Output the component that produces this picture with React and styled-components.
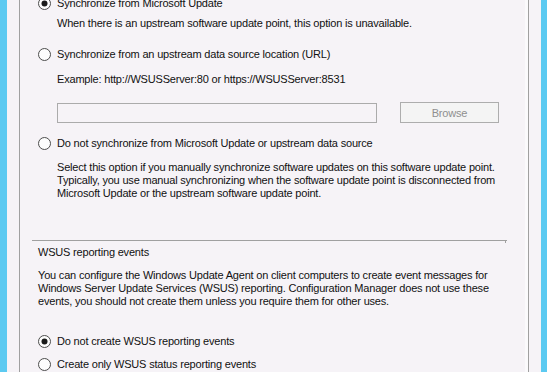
import React from "react";
import styled, { createGlobalStyle } from "styled-components";

const Global = createGlobalStyle`
  html, body { margin: 0; padding: 0; }
  body {
    width: 547px; height: 372px; overflow: hidden;
    font-family: "Liberation Sans", Arial, sans-serif;
    font-size: 11px; color: #111;
    letter-spacing: -0.19px;
  }
`;

const Page = styled.div`
  display: flex;
  width: 547px;
  height: 372px;
  overflow: hidden;
  background: #5ccaf1;
`;

const Strip = styled.div`
  width: ${(p) => p.$w}px;
  flex: none;
`;

const Window = styled.div`
  flex: 1;
  display: flex;
  background: #f6f3f7;
  padding: 0 12px;
`;

const Frame = styled.div`
  flex: 1;
  display: flex;
  border-left: 1px solid #a0a0a0;
  border-right: 1px solid #a0a0a0;
`;

const Content = styled.div`
  flex: 1;
  border-right: 3px solid #fbfafc;
  padding-left: 18px;
  display: flex;
  flex-direction: column;
  margin-top: -3px;
`;

const RadioRow = styled.div`
  display: flex;
  align-items: center;
  gap: 6px;
  height: 13px;
  line-height: 13px;
  margin-top: ${(p) => p.$mt || 0}px;
  white-space: nowrap;
`;

const Text = styled.div`
  line-height: 13px;
  margin-top: ${(p) => p.$mt || 0}px;
  margin-left: ${(p) => p.$ml || 0}px;
  white-space: nowrap;
`;

const Line = styled.span`
  display: block;
`;

const InputRow = styled.div`
  display: flex;
  gap: 23px;
  margin-top: ${(p) => p.$mt || 0}px;
  margin-left: 19px;
  align-items: center;
`;

const TextBox = styled.div`
  width: 318px;
  height: 18px;
  border: 1px solid #ababab;
  background: #f6f3f7;
`;

const Button = styled.div`
  width: 97px;
  height: 19px;
  border: 1px solid #adadad;
  background: #f4f4f4;
  color: #8f8f8f;
  display: flex;
  align-items: center;
  justify-content: center;
  font-size: 11px;
`;

const Separator = styled.div`
  position: relative;
  height: 1px;
  background: #a0a0a0;
  margin-top: ${(p) => p.$mt || 0}px;
  margin-left: -6px;
  width: 475px;
  &::after {
    content: "";
    position: absolute;
    right: 1px;
    top: 1px;
    width: 1px;
    height: 2px;
    background: #a0a0a0;
  }
`;

const Radio = ({ checked }) => (
  <svg width="13" height="13" viewBox="0 0 13 13" style={{ flex: "none" }}>
    <circle cx="6.5" cy="6.5" r="6" fill="#fdfdfd" stroke="#4d4d4d" strokeWidth="1" />
    {checked && <circle cx="6.5" cy="6.5" r="3" fill="#1a1a1a" />}
  </svg>
);

export default function App() {
  return (
    <>
      <Global />
      <Page>
        <Strip $w={7} />
        <Window>
          <Frame>
            <Content>
              <RadioRow>
                <Radio checked />
                <span>Synchronize from Microsoft Update</span>
              </RadioRow>
              <Text $mt={7} $ml={19}>
                When there is an upstream software update point, this option is unavailable.
              </Text>
              <RadioRow $mt={18}>
                <Radio />
                <span>Synchronize from an upstream data source location (URL)</span>
              </RadioRow>
              <Text $mt={12} $ml={19}>
                Example: http://WSUSServer:80 or https://WSUSServer:8531
              </Text>
              <InputRow $mt={16}>
                <TextBox />
                <Button>Browse</Button>
              </InputRow>
              <RadioRow $mt={14}>
                <Radio />
                <span>Do not synchronize from Microsoft Update or upstream data source</span>
              </RadioRow>
              <Text $mt={11} $ml={19}>
                <Line>Select this option if you manually synchronize software updates on this software update point.</Line>
                <Line>Typically, you use manual synchronizing when the software update point is disconnected from</Line>
                <Line>Microsoft Update or the upstream software update point.</Line>
              </Text>
              <Separator $mt={40} />
              <Text $mt={5}>WSUS reporting events</Text>
              <Text $mt={10}>
                <Line>You can configure the Windows Update Agent on client computers to create event messages for</Line>
                <Line>Windows Server Update Services (WSUS) reporting. Configuration Manager does not use these</Line>
                <Line>events, you should not create them unless you require them for other uses.</Line>
              </Text>
              <RadioRow $mt={27}>
                <Radio checked />
                <span>Do not create WSUS reporting events</span>
              </RadioRow>
              <RadioRow $mt={10}>
                <Radio />
                <span>Create only WSUS status reporting events</span>
              </RadioRow>
            </Content>
          </Frame>
        </Window>
        <Strip $w={6} />
      </Page>
    </>
  );
}
